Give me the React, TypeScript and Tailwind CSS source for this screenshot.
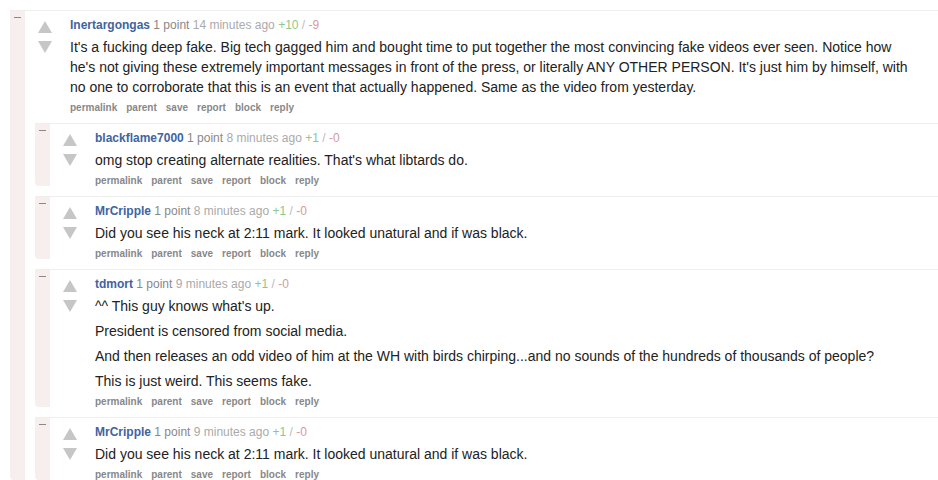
import React from "react";

type C = {
  name: string;
  time: string;
  up: string;
  down: string;
  body: string[];
  children?: C[];
};

const data: C = {
  name: "Inertargongas",
  time: "14 minutes ago",
  up: "+10",
  down: "-9",
  body: [
    "It's a fucking deep fake. Big tech gagged him and bought time to put together the most convincing fake videos ever seen. Notice how he's not giving these extremely important messages in front of the press, or literally ANY OTHER PERSON. It's just him by himself, with no one to corroborate that this is an event that actually happened. Same as the video from yesterday.",
  ],
  children: [
    {
      name: "blackflame7000",
      time: "8 minutes ago",
      up: "+1",
      down: "-0",
      body: ["omg stop creating alternate realities. That's what libtards do."],
    },
    {
      name: "MrCripple",
      time: "8 minutes ago",
      up: "+1",
      down: "-0",
      body: ["Did you see his neck at 2:11 mark. It looked unatural and if was black."],
    },
    {
      name: "tdmort",
      time: "9 minutes ago",
      up: "+1",
      down: "-0",
      body: [
        "^^ This guy knows what's up.",
        "President is censored from social media.",
        "And then releases an odd video of him at the WH with birds chirping...and no sounds of the hundreds of thousands of people?",
        "This is just weird. This seems fake.",
      ],
    },
    {
      name: "MrCripple",
      time: "9 minutes ago",
      up: "+1",
      down: "-0",
      body: ["Did you see his neck at 2:11 mark. It looked unatural and if was black."],
    },
  ],
};

function Up() {
  return (
    <svg width="14" height="12" viewBox="0 0 14 12" className="block">
      <polygon points="7,0 14,12 0,12" fill="#c6c6c6" />
    </svg>
  );
}
function Down() {
  return (
    <svg width="14" height="12" viewBox="0 0 14 12" className="block">
      <polygon points="0,0 14,0 7,12" fill="#c6c6c6" />
    </svg>
  );
}

function Comment({ c }: { c: C }) {
  return (
    <div className="flex border-t border-[#eeeeee]">
      <div className="w-[15px] shrink-0 bg-[#f7eeee] rounded-bl-[4px]">
        <div className="ml-[4px] mt-[6px] w-[7px] h-[1px] bg-[#888888]" />
      </div>
      <div className="flex-1 min-w-0 pl-[10px]">
        <div className="flex">
          <div className="w-[35px] shrink-0 pl-[3px] pt-[10px]">
            <Up />
            <div className="mt-[8px]">
              <Down />
            </div>
          </div>
          <div className="flex-1 min-w-0 pt-[6px]">
            <div className="text-[12px] leading-[16px] whitespace-nowrap">
              <span className="font-bold text-[#40649f]">{c.name}</span>{" "}
              <span className="text-[#888888]">1 point</span>{" "}
              <span className="text-[#aaaaaa]">{c.time}</span>{" "}
              <span className="text-[#8cc88c]">{c.up}</span>{" "}
              <span className="text-[#bbbbbb]">/</span>{" "}
              <span className="text-[#d69a9a]">{c.down}</span>
            </div>
            <div className="mt-[4px] max-w-[840px] flex flex-col gap-[5px] text-[14px] leading-[20px] text-[#222222]">
              {c.body.map((p, i) => (
                <p key={i}>{p}</p>
              ))}
            </div>
            <div className="mt-[5px] flex gap-[9px] text-[10px] leading-[11px] font-bold text-[#888888]">
              <span>permalink</span>
              <span>parent</span>
              <span>save</span>
              <span>report</span>
              <span>block</span>
              <span>reply</span>
            </div>
          </div>
        </div>
        {c.children?.map((ch, i) => (
          <div key={i} className="mt-[10px]">
            <Comment c={ch} />
          </div>
        ))}
      </div>
    </div>
  );
}

export default function App() {
  return (
    <div
      className="w-[938px] h-[480px] overflow-hidden bg-white pt-[10px] pl-[10px]"
      style={{ fontFamily: '"Liberation Sans", Arial, sans-serif' }}
    >
      <Comment c={data} />
    </div>
  );
}
